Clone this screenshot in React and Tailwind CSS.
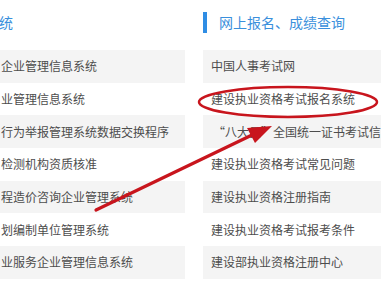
import React from 'react';

const left = [
  '企业管理信息系统',
  '业管理信息系统',
  '行为举报管理系统数据交换程序',
  '检测机构资质核准',
  '程造价咨询企业管理系统',
  '划编制单位管理系统',
  '业服务企业管理信息系统',
];

const right = [
  '中国人事考试网',
  '建设执业资格考试报名系统',
  '“八大员”全国统一证书考试信息',
  '建设执业资格考试常见问题',
  '建设执业资格注册指南',
  '建设执业资格考试报考条件',
  '建设部执业资格注册中心',
];

function Row({ text, i, pl }){
  return (
    <div className={`h-[32.7px] flex items-center whitespace-nowrap overflow-hidden ${pl} ${i % 2 === 0 ? 'bg-[#f4f4f4]' : 'bg-white'}`}>
      {text}
    </div>
  );
}

export default function App(){
  return (
    <div className="relative w-[381px] h-[286px] overflow-hidden bg-white text-[12px] text-[#4d4d4d]" style={{ fontFamily: '"Noto Sans CJK SC", "Noto Sans", sans-serif' }}>
      <div className="flex">
        <div className="w-[185px] shrink-0">
          <div className="h-[50px] flex items-center text-[14px] text-[#3a8fdc] pb-[6px] -ml-[1px]">统</div>
          {left.map((t,i)=> <Row key={i} text={t} i={i} pl="pl-[1px]" />)}
        </div>
        <div className="w-[18px] shrink-0" />
        <div className="w-[178px] shrink-0 overflow-hidden">
          <div className="h-[50px] flex items-center pb-[6px]">
            <div className="w-[4px] h-[21px] bg-[#2f8de4]" />
            <div className="ml-[12px] text-[14px] text-[#3a8fdc]">网上报名、成绩查询</div>
          </div>
          {right.map((t,i)=> <Row key={i} text={t} i={i} pl={i === 2 ? 'pl-[10px]' : 'pl-[8px]'} />)}
        </div>
      </div>
      <svg className="absolute inset-0 pointer-events-none" width="381" height="286">
        <ellipse cx="288" cy="102" rx="89" ry="15" fill="none" stroke="#c8151d" strokeWidth="2.5" />
        <line x1="96" y1="210" x2="252" y2="135" stroke="#c8151d" strokeWidth="3.2" strokeLinecap="round" />
        <polygon points="272,126 255,143 247,128" fill="#c8151d" />
      </svg>
    </div>
  );
}
